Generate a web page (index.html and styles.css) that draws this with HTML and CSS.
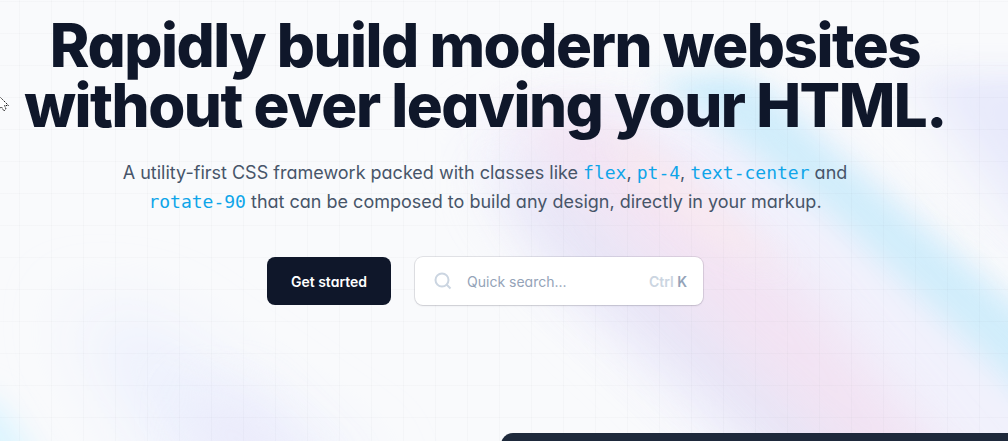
FILE: index.html
```html
<!DOCTYPE html>
<html lang="en">
<head>
  <meta charset="utf-8">
  <meta name="viewport" content="width=device-width, initial-scale=1">
  <title>Rapidly build modern websites</title>
  <link rel="stylesheet" href="styles.css">
</head>
<body>
  <div class="page">
    <div class="backdrop" aria-hidden="true">
      <svg class="beams" viewBox="0 0 1008 441" preserveAspectRatio="none">
        <defs>
          <filter id="b12" x="-50%" y="-50%" width="200%" height="200%"><feGaussianBlur stdDeviation="15"/></filter>
          <filter id="b20" x="-50%" y="-50%" width="200%" height="200%"><feGaussianBlur stdDeviation="26"/></filter>
          <filter id="b34" x="-50%" y="-50%" width="200%" height="200%"><feGaussianBlur stdDeviation="34"/></filter>
        </defs>
        <path d="M900 60H1100V300L1010 210Z" fill="#e7e9fb" filter="url(#b20)"/>
        <path d="M470 140L560 100L780 110L1060 370V500H780L560 290Z" fill="#f1f1fc" filter="url(#b20)"/>
        <path d="M490 180L560 170L940 500H820L560 270Z" fill="#e7e5f6" filter="url(#b20)"/>
        <path d="M500 110L600 110L800 280L980 500H890L660 280Z" fill="#f3e0f1" opacity=".8" filter="url(#b20)"/>
        <path d="M600 120L680 170L790 270L720 250L640 190Z" fill="#f9e9ef" opacity=".8" filter="url(#b12)"/>
        <path d="M650 75L735 60L840 155L1050 335V420L950 325L820 205Z" fill="#d0edfb" filter="url(#b12)"/>
        <path d="M70 310L150 320L380 480H170Z" fill="#ecf0fd" filter="url(#b34)"/>
        <path d="M190 400L240 390L340 490H210Z" fill="#ebebfb" filter="url(#b20)"/>
        <path d="M-40 385L0 405L45 470H-40Z" fill="#dcf4fe" filter="url(#b12)"/>
      </svg>
      <div class="grid"></div>
    </div>
    <svg class="pointer" viewBox="0 0 10 18" aria-hidden="true">
      <path d="M-3 -2L8.500 9.500H4.500L6 13L4 15L1.500 11L-3 14" fill="#fff" stroke="#111" stroke-dasharray="1.500 1"/>
    </svg>
    <main class="hero">
      <h1 class="title">Rapidly build modern websites without ever leaving your HTML.</h1>
      <p class="lead">A utility-first CSS framework packed with classes like <code>flex</code>, <code>pt-4</code>, <code>text-center</code> and <code>rotate-90</code> that can be composed to build any design, directly in your markup.</p>
      <div class="actions">
        <a class="start" href="#start">Get started</a>
        <label class="search">
          <svg class="search-icon" viewBox="0 0 24 24" fill="none" stroke="currentColor" stroke-width="2" aria-hidden="true"><path d="M19.500 19.500L15.500 15.500"/><circle cx="11" cy="11" r="6.500"/></svg>
          <input type="text" placeholder="Quick search..." aria-label="Quick search">
          <kbd class="hint"><span>Ctrl</span> K</kbd>
        </label>
      </div>
    </main>
    <div class="editor"></div>
  </div>
</body>
</html>
```
FILE: styles.css
```css
* { box-sizing: border-box; }
body {
  margin: 0;
  overflow: hidden;
  background: #f9fafc;
  color: #0f172a;
  font-family: Inter, "Liberation Sans", sans-serif;
  font-feature-settings: "cv11";
}
.page {
  position: relative;
  min-height: 100vh;
  overflow: hidden;
}
.backdrop { position: absolute; inset: 0; }
.beams {
  display: block;
  width: 100%;
  height: 100%;
  -webkit-mask-image: linear-gradient(transparent 40px, #000 90px);
  mask-image: linear-gradient(transparent 40px, #000 90px);
}
.grid {
  position: absolute;
  inset: 0;
  background-image:
    linear-gradient(90deg, rgba(15, 23, 42, 0.02) 1px, transparent 1px),
    linear-gradient(rgba(15, 23, 42, 0.02) 1px, transparent 1px);
  background-size: 32px 32px;
  background-position: 19px 1px;
}
.pointer {
  position: absolute;
  left: 0;
  top: 96px;
  width: 10px;
  height: 18px;
}
.hero {
  position: relative;
  padding: 15px 48px 0 10px;
  text-align: center;
}
.title {
  margin: 0 auto;
  font-size: 60px;
  line-height: 60px;
  font-weight: 800;
  letter-spacing: -0.025em;
}
.lead {
  max-width: 768px;
  margin: 23px auto 0;
  color: #475569;
  font-size: 18px;
  line-height: 29px;
}
.lead code {
  color: #0ea5e9;
  font-family: "DejaVu Sans Mono", "Liberation Mono", monospace;
  font-size: 18px;
  line-height: 1;
}
.actions {
  display: flex;
  justify-content: center;
  gap: 24px;
  margin-top: 41px;
  font-size: 14px;
}
.start {
  display: flex;
  align-items: center;
  height: 48px;
  padding: 0 24px;
  border-radius: 8px;
  background: #0f172a;
  color: #fff;
  font-weight: 600;
  text-decoration: none;
}
.search {
  display: flex;
  align-items: center;
  gap: 12px;
  width: 288px;
  height: 48px;
  padding: 0 16px;
  border-radius: 8px;
  background: #fff;
  box-shadow: 0 0 0 1px rgba(15, 23, 42, 0.1), 0 1px 2px rgba(15, 23, 42, 0.1);
  color: #94a3b8;
}
.search-icon { flex: none; width: 24px; height: 24px; color: #cbd5e1; }
.search input {
  flex: 1;
  min-width: 0;
  padding: 0;
  border: 0;
  outline: 0;
  background: none;
  color: inherit;
  font: inherit;
  font-feature-settings: inherit;
}
.search input::placeholder { color: #94a3b8; opacity: 1; }
.hint { font: inherit; font-weight: 600; }
.hint span { color: #cbd5e1; }
.editor {
  position: relative;
  height: 96px;
  margin: 128px 0 -88px 501px;
  border-radius: 12px 0 0 0;
  background: #1e293b;
}
@media (max-width: 900px) {
  .title { font-size: 40px; line-height: 44px; }
  .actions { flex-wrap: wrap; }
  .editor { margin-left: 50%; }
}
```
